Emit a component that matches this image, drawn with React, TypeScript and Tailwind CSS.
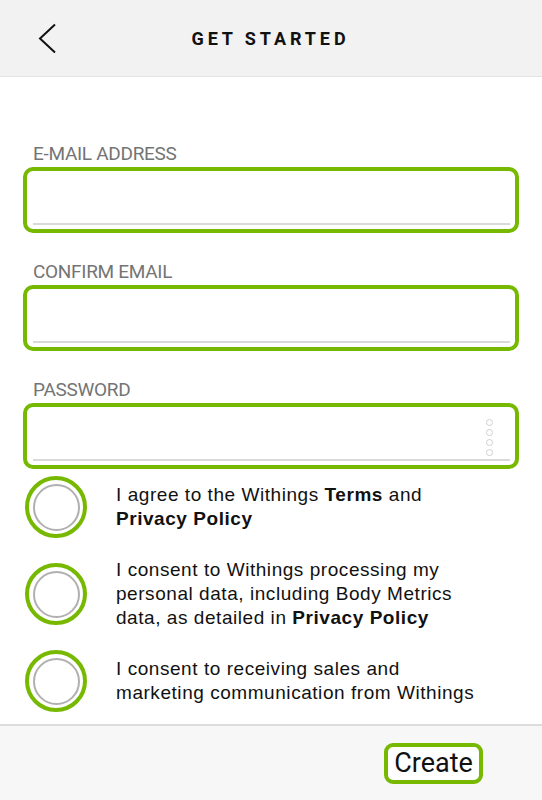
import React from "react";

const field = [
  { label: "E-MAIL ADDRESS", password: false },
  { label: "CONFIRM EMAIL", password: false },
  { label: "PASSWORD", password: true },
];

function PasswordDots() {
  return (
    <div className="absolute right-[22px] top-[12px] flex flex-col gap-[3px]">
      {[0, 1, 2, 3].map((i) => (
        <span
          key={i}
          className="block h-[7px] w-[7px] rounded-full border border-[#cfcfcf]"
        />
      ))}
    </div>
  );
}

function Field({ label, password }: { label: string; password: boolean }) {
  return (
    <div className="flex flex-col">
      <label className="pl-[10px] text-[19px] leading-[19px] tracking-[-0.3px] text-[#747474] [font-family:Roboto,sans-serif]">
        {label}
      </label>
      <div className="relative mt-[4px] h-[66px] rounded-[10px] border-4 border-[#76b900] bg-white">
        {password && <PasswordDots />}
        <div className="absolute bottom-[4px] left-[6px] right-[5px] h-[2px] bg-[#d9d9d9]" />
      </div>
    </div>
  );
}

function Consent({ children }: { children: React.ReactNode }) {
  return (
    <div className="flex h-[62px] items-center">
      <div className="flex h-[62px] w-[62px] shrink-0 items-center justify-center rounded-full border-4 border-[#76b900] bg-white">
        <div className="h-[47px] w-[47px] rounded-full border-2 border-[#b0b0b0]" />
      </div>
      <p className="ml-[29px] whitespace-nowrap text-[19px] leading-[24px] tracking-[0.55px] text-[#111] [font-family:Liberation_Sans,Arial,sans-serif]">
        {children}
      </p>
    </div>
  );
}

export default function App() {
  return (
    <div className="flex h-[800px] w-full flex-col bg-white">
      <header className="relative flex h-[77px] shrink-0 items-center justify-center border-b border-[#e3e3e3] bg-[#f2f2f2]">
        <svg
          className="absolute left-[37px] top-[23px]"
          width="20"
          height="31"
          viewBox="0 0 20 31"
          fill="none"
        >
          <path d="M18 1.5 L3 15.5 L18 29.5" stroke="#111" strokeWidth="2" />
        </svg>
        <h1 className="ml-[-1px] text-[18px] font-bold tracking-[3.9px] text-[#111] [font-family:Roboto,sans-serif]">
          GET STARTED
        </h1>
      </header>

      <main className="flex flex-col px-[23px] pt-[67px]">
        <div className="flex flex-col gap-[29px]">
          {field.map((f) => (
            <Field key={f.label} label={f.label} password={f.password} />
          ))}
        </div>

        <div className="mt-[7px] flex flex-col gap-[25px] pl-[2px]">
          <Consent>
            I agree to the Withings <b>Terms</b> and
            <br />
            <b>Privacy Policy</b>
          </Consent>
          <Consent>
            I consent to Withings processing my
            <br />
            personal data, including Body Metrics
            <br />
            data, as detailed in <b>Privacy Policy</b>
          </Consent>
          <Consent>
            I consent to receiving sales and
            <br />
            marketing communication from Withings
          </Consent>
        </div>
      </main>

      <footer className="mt-auto flex h-[76px] shrink-0 items-center justify-end border-t-2 border-[#dcdcdc] bg-[#f7f7f7] pr-[59px]">
        <button className="flex h-[41px] w-[99px] items-center justify-center rounded-[9px] border-4 border-[#76b900] bg-white text-[27px] leading-none text-[#111] [font-family:Roboto,sans-serif]">
          Create
        </button>
      </footer>
    </div>
  );
}
